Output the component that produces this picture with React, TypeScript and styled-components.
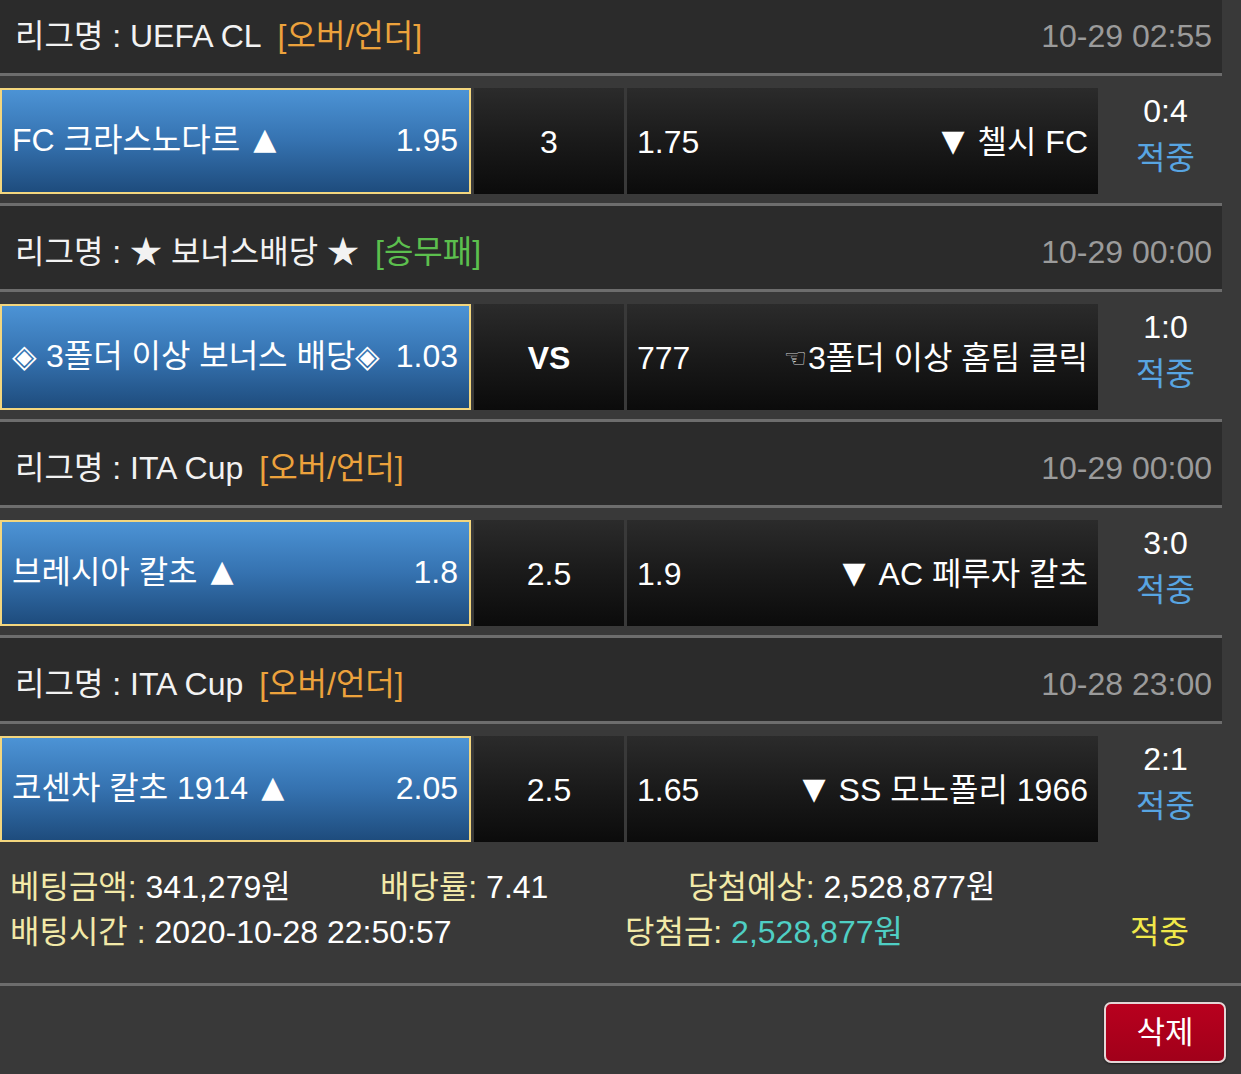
import React from "react";
import styled, { createGlobalStyle } from "styled-components";

const FONT = `"Liberation Sans", "Noto Sans CJK KR", "Noto Sans", sans-serif`;

const GlobalStyle = createGlobalStyle`
  html, body {
    margin: 0;
    padding: 0;
    background: #393939;
  }
  body {
    font-family: ${FONT};
    color: #ffffff;
    overflow: hidden;
  }
  * { box-sizing: border-box; }
`;

const Page = styled.div`
  width: 1241px;
  height: 1074px;
  overflow: hidden;
  background: #393939;
  font-size: 32px;
  line-height: 1.2;
`;

const List = styled.div`
  width: 1222px;
  margin-top: -10px;
`;

const LeagueHeader = styled.div`
  height: 86px;
  background: #2b2b2b;
  border-bottom: 3px solid #6d6d6d;
  display: flex;
  align-items: center;
  justify-content: space-between;
  padding: 10px 10px 0 15px;
`;

const LeagueName = styled.div`
  color: #f2f2f2;
  white-space: nowrap;
`;

const Tag = styled.span<{ $color: string }>`
  color: ${(p) => p.$color};
  margin-left: 16px;
`;

const Time = styled.div`
  color: #9b9b9b;
`;

const MatchRow = styled.div<{ $last?: boolean }>`
  display: grid;
  grid-template-columns: 471px 150px 471px 1fr;
  column-gap: 3px;
  padding: 12px 0 9px;
  border-bottom: ${(p) => (p.$last ? "none" : "3px solid #6d6d6d")};
  height: ${(p) => (p.$last ? "127px" : "130px")};
`;

const HomeCell = styled.div`
  height: 106px;
  border: 2px solid #f3d67e;
  background: linear-gradient(to bottom, #4c93d5 0%, #3572b0 50%, #1e4c7d 100%);
  display: flex;
  align-items: center;
  justify-content: space-between;
  padding: 0 11px 2px 10px;
  white-space: nowrap;
`;

const DarkCell = styled.div<{ $align?: string }>`
  height: 106px;
  background: linear-gradient(to bottom, #2b2b2b 0%, #1a1a1a 50%, #0b0b0b 100%);
  display: flex;
  align-items: center;
  justify-content: ${(p) => p.$align || "space-between"};
  padding: 2px 10px 0 10px;
  white-space: nowrap;
`;

const Bold = styled.span`
  font-weight: 700;
`;

const Tri = styled.span<{ $side: "left" | "right" }>`
  font-family: "DejaVu Sans", sans-serif;
  font-size: 30px;
  vertical-align: 2px;
  margin-left: ${(p) => (p.$side === "left" ? "13px" : "0")};
  margin-right: ${(p) => (p.$side === "right" ? "13px" : "0")};
`;

const Hand = styled.span`
  font-family: "DejaVu Sans", sans-serif;
  font-size: 26px;
  color: #cfcfcf;
  margin-right: 1px;
  vertical-align: 2px;
`;

const ScoreCell = styled.div`
  display: flex;
  flex-direction: column;
  align-items: center;
  justify-content: center;
  line-height: 47px;
  padding: 0 0 13px 8px;
`;

const Score = styled.div`
  color: #ffffff;
`;

const Result = styled.div`
  color: #58a5e2;
`;

const InfoArea = styled.div`
  padding: 14px 0 28px 10px;
  border-bottom: 3px solid #6d6d6d;
`;

const InfoLine = styled.div<{ $cols: string }>`
  display: grid;
  grid-template-columns: ${(p) => p.$cols};
  line-height: 45px;
  white-space: nowrap;
`;

const Label = styled.span`
  color: #f2e9a8;
`;

const Value = styled.span<{ $color?: string }>`
  color: ${(p) => p.$color || "#ffffff"};
`;

const Hit = styled.span`
  color: #f1e84a;
`;

const ButtonBar = styled.div`
  display: flex;
  justify-content: flex-end;
  padding: 16px 15px 0 0;
`;

const DeleteButton = styled.button`
  width: 122px;
  height: 61px;
  border: 2px solid #e4d6d6;
  border-radius: 7px;
  background: linear-gradient(to bottom, #b8001e, #a1001a);
  color: #ffffff;
  font-family: ${FONT};
  font-size: 31px;
  line-height: 1.2;
  padding: 0;
  box-shadow: 0 1px 2px rgba(0, 0, 0, 0.5);
`;

type Match = {
  league: string;
  tag: string;
  tagColor: string;
  time: string;
  home: React.ReactNode;
  homeOdds: string;
  mid: React.ReactNode;
  awayOdds: string;
  away: React.ReactNode;
  score: string;
};

const ORANGE = "#eca23c";
const GREEN = "#5cbf4e";

const up = <Tri $side="left">▲</Tri>;
const down = <Tri $side="right">▼</Tri>;

const matches: Match[] = [
  {
    league: "리그명 : UEFA CL",
    tag: "[오버/언더]",
    tagColor: ORANGE,
    time: "10-29 02:55",
    home: <>FC 크라스노다르{up}</>,
    homeOdds: "1.95",
    mid: "3",
    awayOdds: "1.75",
    away: <>{down}첼시 FC</>,
    score: "0:4",
  },
  {
    league: "리그명 : ★ 보너스배당 ★",
    tag: "[승무패]",
    tagColor: GREEN,
    time: "10-29 00:00",
    home: "◈ 3폴더 이상 보너스 배당◈",
    homeOdds: "1.03",
    mid: <Bold>VS</Bold>,
    awayOdds: "777",
    away: (
      <>
        <Hand>☜</Hand>3폴더 이상 홈팀 클릭
      </>
    ),
    score: "1:0",
  },
  {
    league: "리그명 : ITA Cup",
    tag: "[오버/언더]",
    tagColor: ORANGE,
    time: "10-29 00:00",
    home: <>브레시아 칼초{up}</>,
    homeOdds: "1.8",
    mid: "2.5",
    awayOdds: "1.9",
    away: <>{down}AC 페루자 칼초</>,
    score: "3:0",
  },
  {
    league: "리그명 : ITA Cup",
    tag: "[오버/언더]",
    tagColor: ORANGE,
    time: "10-28 23:00",
    home: <>코센차 칼초 1914{up}</>,
    homeOdds: "2.05",
    mid: "2.5",
    awayOdds: "1.65",
    away: <>{down}SS 모노폴리 1966</>,
    score: "2:1",
  },
];

export default function App() {
  return (
    <Page>
      <GlobalStyle />
      <List>
        {matches.map((m, i) => (
          <React.Fragment key={i}>
            <LeagueHeader>
              <LeagueName>
                {m.league}
                <Tag $color={m.tagColor}>{m.tag}</Tag>
              </LeagueName>
              <Time>{m.time}</Time>
            </LeagueHeader>
            <MatchRow $last={i === matches.length - 1}>
              <HomeCell>
                <span>{m.home}</span>
                <span>{m.homeOdds}</span>
              </HomeCell>
              <DarkCell $align="center">{m.mid}</DarkCell>
              <DarkCell>
                <span>{m.awayOdds}</span>
                <span>{m.away}</span>
              </DarkCell>
              <ScoreCell>
                <Score>{m.score}</Score>
                <Result>적중</Result>
              </ScoreCell>
            </MatchRow>
          </React.Fragment>
        ))}
      </List>
      <InfoArea>
        <InfoLine $cols="370px 308px auto">
          <span>
            <Label>베팅금액:</Label> <Value>341,279원</Value>
          </span>
          <span>
            <Label>배당률:</Label> <Value>7.41</Value>
          </span>
          <span>
            <Label>당첨예상:</Label> <Value>2,528,877원</Value>
          </span>
        </InfoLine>
        <InfoLine $cols="615px 505px auto">
          <span>
            <Label>배팅시간 :</Label> <Value>2020-10-28 22:50:57</Value>
          </span>
          <span>
            <Label>당첨금:</Label> <Value $color="#4fcfc4">2,528,877원</Value>
          </span>
          <Hit>적중</Hit>
        </InfoLine>
      </InfoArea>
      <ButtonBar>
        <DeleteButton>삭제</DeleteButton>
      </ButtonBar>
    </Page>
  );
}
